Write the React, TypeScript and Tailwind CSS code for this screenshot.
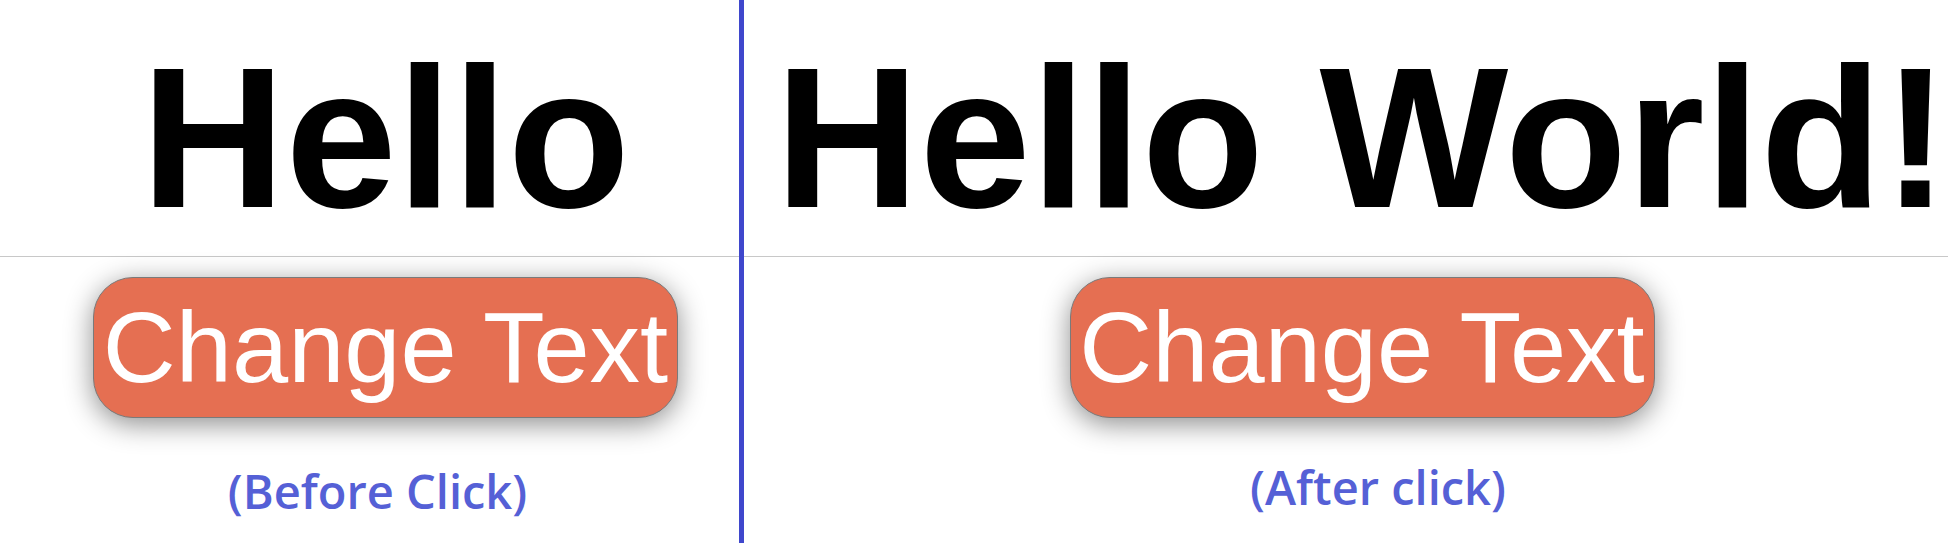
// Two panels side by side: the text before and after the button is clicked.

function Panel({
  title,
  caption,
  captionClass,
}: {
  title: string;
  caption: string;
  captionClass: string;
}) {
  return (
    <div className="flex flex-col">
      {/* heading area */}
      <div className="h-[256px] pl-[32px] pt-[38px] flex justify-center">
        <h1 className="whitespace-nowrap font-['Liberation_Sans',Arial,sans-serif] text-[200px] font-bold leading-[200px] text-black">
          {title}
        </h1>
      </div>
      <div className="h-px bg-[#c8c8c8]" />
      {/* button + caption */}
      <div className="pl-[32px] flex flex-col items-center">
        <button className="mt-[20px] flex h-[141px] w-[585px] items-center justify-center rounded-[40px] border border-[#7a7a7a] bg-[#e56f52] font-['Liberation_Sans',Arial,sans-serif] text-[101px] text-white shadow-[0_6px_28px_rgba(0,0,0,0.45)]">
          Change Text
        </button>
        <div
          className={
            "font-['Open_Sans','Noto_Sans',sans-serif] text-[47px] leading-[62px] text-[#5560d6] " +
            captionClass
          }
        >
          {caption}
        </div>
      </div>
    </div>
  );
}

export default function App() {
  return (
    <div className="flex h-[543px] w-[1948px] overflow-hidden bg-white">
      <div className="w-[739px] shrink-0">
        <Panel
          title="Hello"
          caption="(Before Click)"
          captionClass="mt-[42px] mr-[16px] font-semibold"
        />
      </div>
      <div className="w-[5px] shrink-0 bg-[#3f47cc]" />
      <div className="w-[1204px] shrink-0">
        <Panel
          title="Hello World!"
          caption="(After click)"
          captionClass="mt-[38px] ml-[32px] font-semibold"
        />
      </div>
    </div>
  );
}
